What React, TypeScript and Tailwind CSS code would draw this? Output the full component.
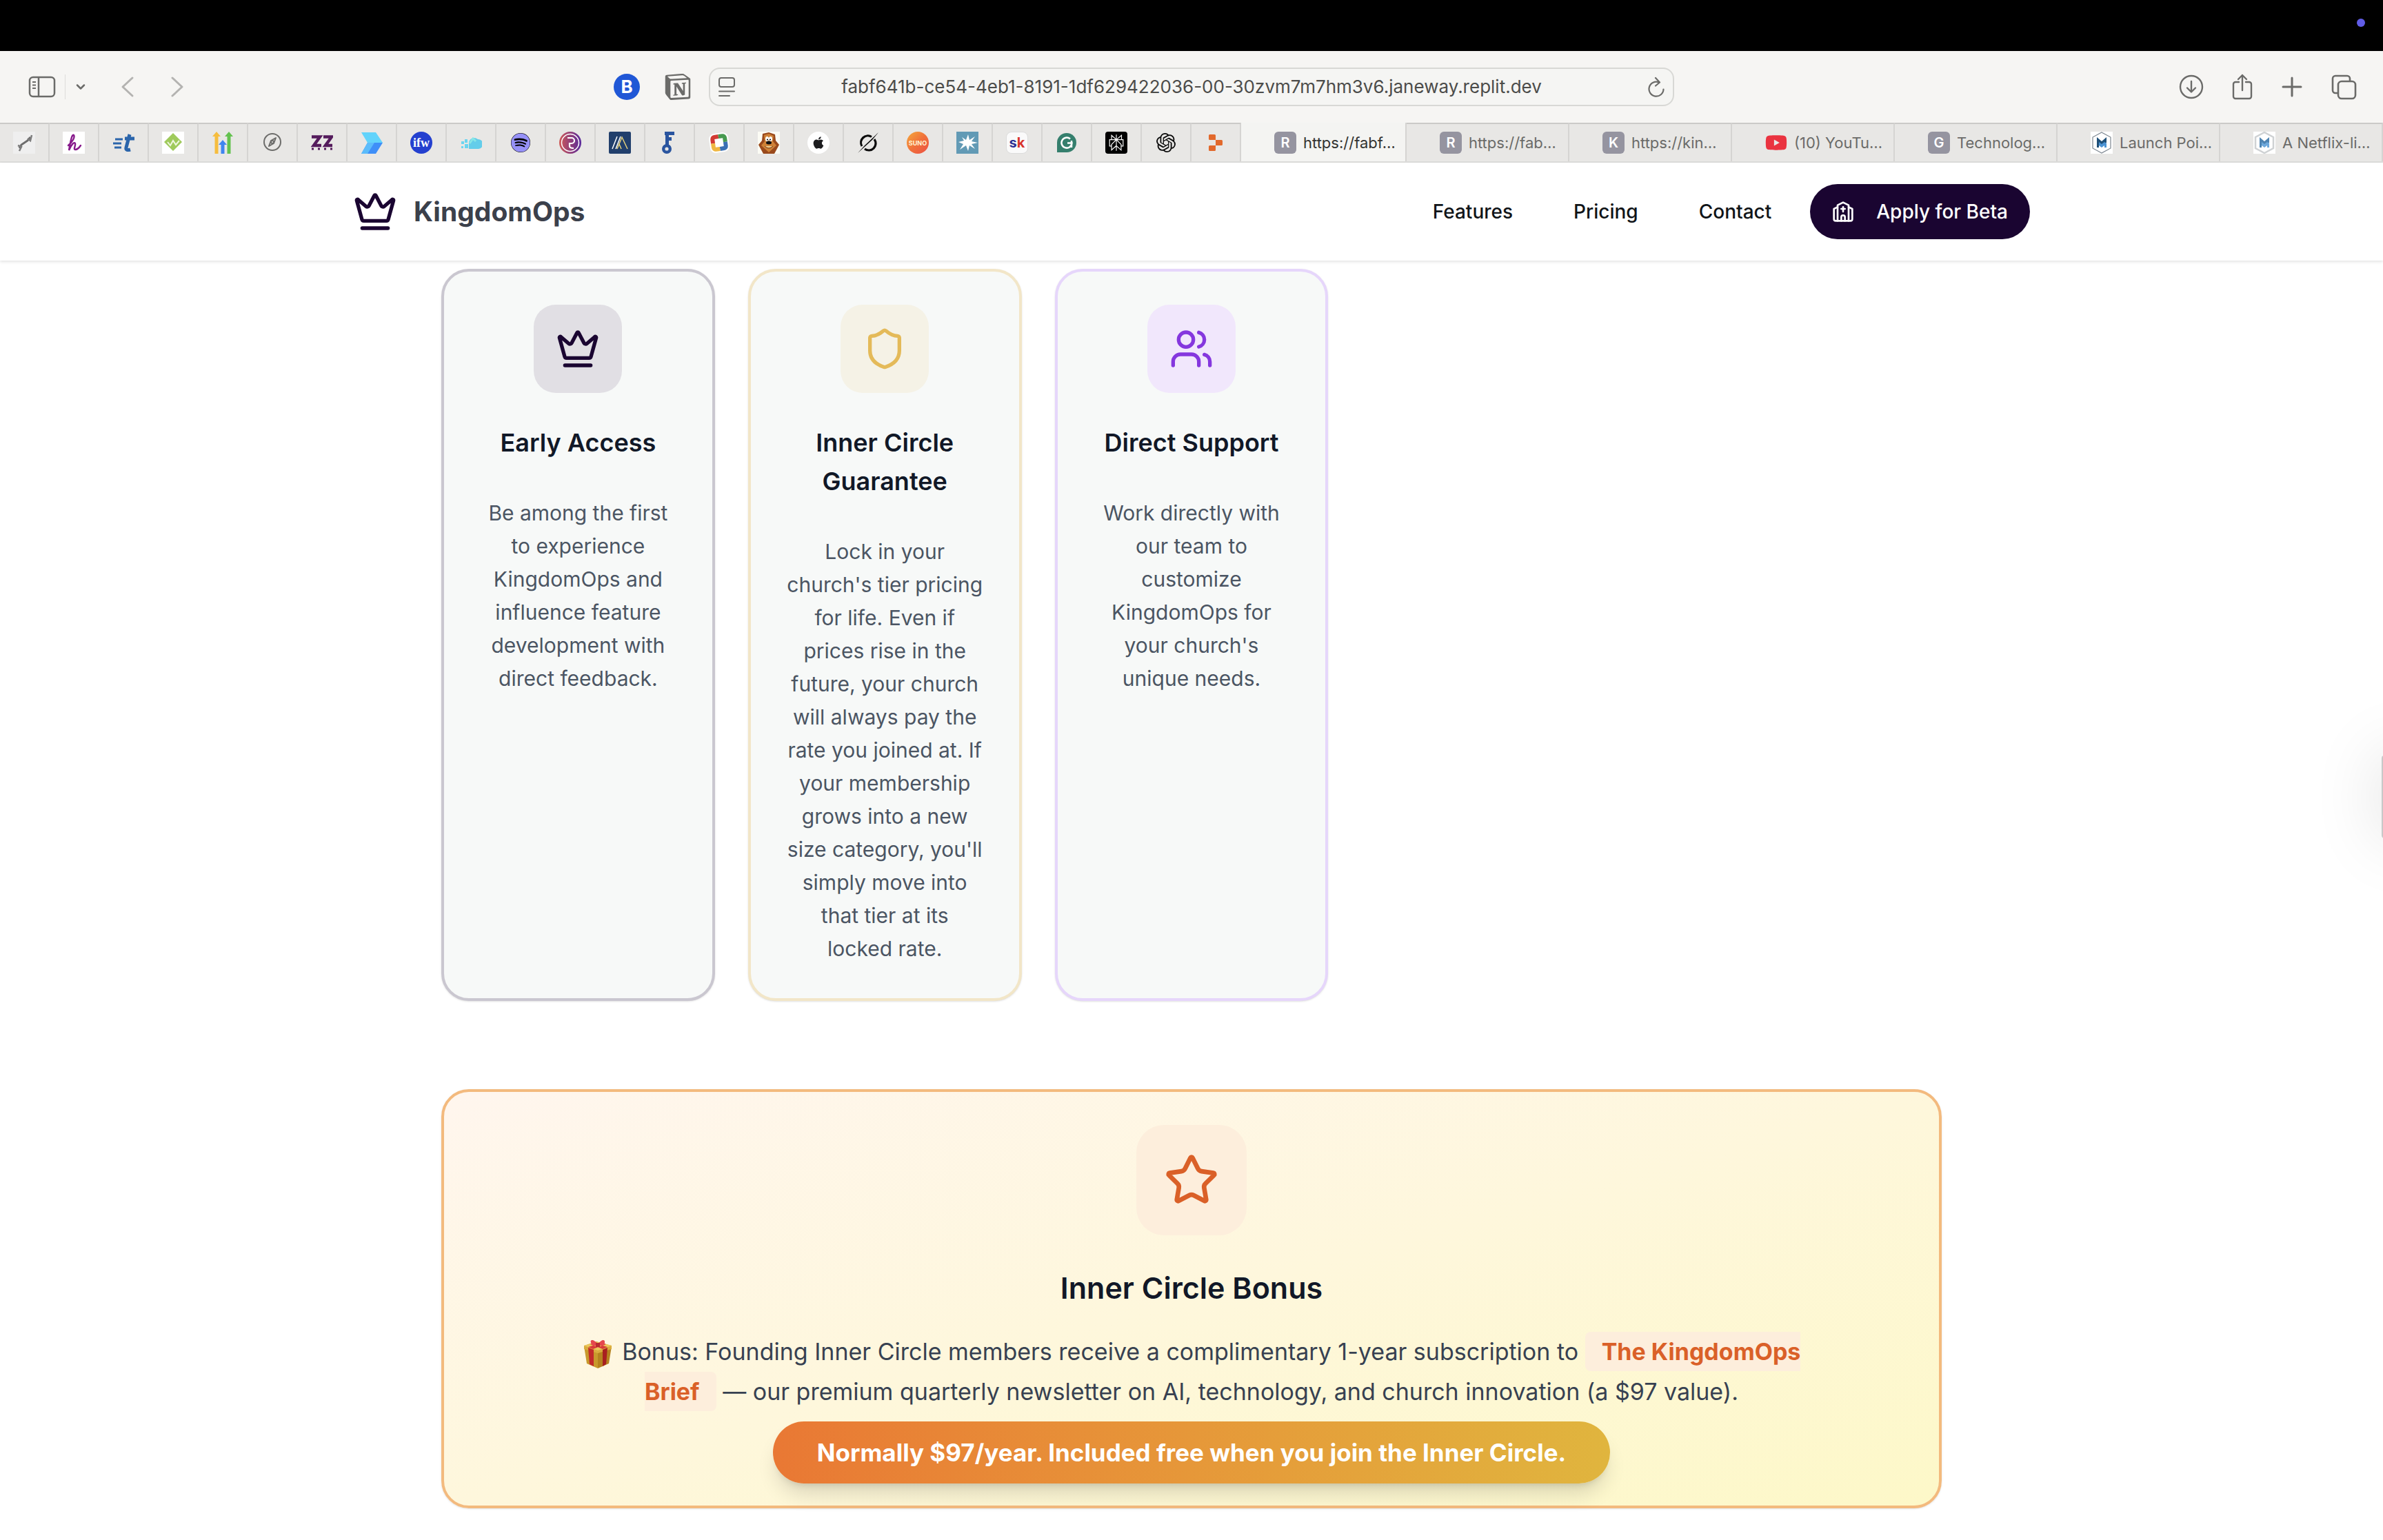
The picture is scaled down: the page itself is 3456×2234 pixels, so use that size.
import type { ReactNode } from "react";
import { ChevronDown, Crown, Shield, Star, Users } from "lucide-react";
import { FaApple, FaSpotify, FaYoutube } from "react-icons/fa";
import { SiNotion, SiOpenai, SiPerplexity, SiReplit } from "react-icons/si";

function ChurchIcon() {
  return (
    <svg viewBox="0 0 24 24" fill="none" stroke="currentColor" strokeWidth="2" strokeLinecap="round" strokeLinejoin="round" className="size-8" aria-hidden="true">
      <path d="m18 7 4 2v11a2 2 0 0 1-2 2H4a2 2 0 0 1-2-2V9l4-2" />
      <path d="M14 22v-4a2 2 0 0 0-4 0v4" />
      <path d="M18 22V5l-6-3-6 3v17" />
      <path d="M12 7v5" />
      <path d="M10 9h4" />
    </svg>
  );
}

function GiftIcon() {
  return (
    <svg viewBox="0 0 44 44" className="mr-1 inline-block size-11 align-middle" role="img" aria-label="Gift">
      <path d="M2 11 22 18V43L6 36Z" fill="#c8992c" />
      <path d="M42 11 22 18V43L38 36Z" fill="#b5821f" />
      <path d="M2 10 20 4 42 10V15L22 21 2 15Z" fill="#d9ac3e" />
      <path d="M2 10 22 5 42 10 22 17Z" fill="#ecc95c" />
      <path d="M8 13 16 16V40L10 37Z" fill="#c22a2a" />
      <path d="M36 13 29 16V40L34 37Z" fill="#a82020" />
      <path d="M8 12 28 6 34 8 15 15ZM36 12 16 6 11 8 29 15Z" fill="#d93a3a" />
      <path d="M22 8C16 0 10 1 12 6S18 11 22 9C26 11 31 11 32 6S28 0 22 8Z" fill="#e5484d" />
      <path d="M19 6h6v6h-6z" fill="#b92b31" />
    </svg>
  );
}

function Tile({ className, children }: { className: string; children: ReactNode }) {
  return <span className={`flex size-8 shrink-0 items-center justify-center overflow-hidden ${className}`}>{children}</span>;
}

const svgClass = "size-8 shrink-0";

const pinned: { label: string; icon: ReactNode }[] = [
  {
    label: "Sketch",
    icon: (
      <svg viewBox="0 0 32 32" className={svgClass}>
        <rect width="32" height="32" fill="#efefef" />
        <path d="M9 24 12 19 21 13 25 8" fill="none" stroke="#6d6d6d" strokeWidth="3" />
        <path d="M7 20 12 22 9 28M21 10 25 13 27 5" fill="none" stroke="#7d7d7d" strokeWidth="2.500" />
      </svg>
    ),
  },
  {
    label: "Honeybook",
    icon: (
      <svg viewBox="0 0 32 32" className={svgClass}>
        <rect width="32" height="32" fill="#fff" />
        <path d="M8 20C14 15 18 8 16 5 13 3 11 16 9 27 12 19 17 14 18 17 19 20 15 26 18 26 22 26 24 23 26 20" fill="none" stroke="#871a8b" strokeWidth="2.400" strokeLinecap="round" />
      </svg>
    ),
  },
  {
    label: "Toggl",
    icon: (
      <svg viewBox="0 0 32 32" className={svgClass}>
        <path d="M4 11h11M1 17h12M3 23h10" stroke="#2b65ab" strokeWidth="3" />
        <path d="M25 4 20 23Q19 28 26 26M18 10h14" fill="none" stroke="#2b65ab" strokeWidth="5" />
      </svg>
    ),
  },
  {
    label: "Diamond",
    icon: (
      <svg viewBox="0 0 32 32" className={svgClass}>
        <rect width="32" height="32" fill="#fff" />
        <path d="M16 2 29 15 16 28 3 15Z" fill="#9fca5c" />
        <path d="M8 15l4 5 4-7 4 6 5-6" fill="none" stroke="#eff7df" strokeWidth="2" />
      </svg>
    ),
  },
  {
    label: "Arrows",
    icon: (
      <svg viewBox="0 0 32 32" className={svgClass}>
        <path d="M7 0 13 7H9.500V32H4.500V7H1Z" fill="#f6bd3e" />
        <path d="M25 0 31 7H27.500V32H22.500V7H19Z" fill="#63c24f" />
        <path d="M16 12 22 19H18.500V32H13.500V19H10Z" fill="#3f85f0" />
      </svg>
    ),
  },
  {
    label: "Start page",
    icon: (
      <svg viewBox="0 0 32 32" className={svgClass} fill="none" stroke="#6d6d6b" strokeWidth="2">
        <circle cx="16" cy="15" r="12" />
        <path d="M21 9 18 17 11 21 14 13Z" strokeLinejoin="round" />
        <circle cx="16" cy="15" r="2" />
      </svg>
    ),
  },
  {
    label: "Zigzag",
    icon: (
      <svg viewBox="0 0 32 32" className={svgClass}>
        <path d="M1 7.500H13L4 20H15M18 7.500H30L21 20H31" fill="none" stroke="#541b5c" strokeWidth="4.500" />
        <path d="M1 25h3M10 25h3M19 25h3M28 25h3" stroke="#541b5c" strokeWidth="3" />
      </svg>
    ),
  },
  {
    label: "Arrowhead",
    icon: (
      <svg viewBox="0 0 32 32" className={svgClass}>
        <path d="M1 1H22L32 16H10Z" fill="#62d3fb" />
        <path d="M10 16H32L22 32H1Z" fill="#3f8ff8" />
        <path d="M10 16H20L10 32H1Z" fill="#5cbcfb" />
      </svg>
    ),
  },
  {
    label: "IFW",
    icon: <Tile className="rounded-full bg-[#2440cf] font-['Liberation_Serif',serif] text-lg leading-none font-bold text-white">ifw</Tile>,
  },
  {
    label: "Cloud",
    icon: (
      <svg viewBox="0 0 32 32" className={svgClass}>
        <path d="M13 25V15A8 8 0 0 1 26 11 7 7 0 0 1 27 25Z" fill="#63cdea" />
        <path d="M14 17l5-7 4 4" fill="none" stroke="#86e6e6" strokeWidth="3" />
        <g fill="#6bd5f0">
          <rect x="2" y="14" width="4" height="4" />
          <rect x="7" y="11" width="4" height="5" />
          <rect x="7" y="18" width="5" height="6" />
          <rect x="2" y="21" width="3" height="3" />
        </g>
      </svg>
    ),
  },
  { label: "Spotify", icon: <Tile className="rounded-full"><FaSpotify className="size-7 rounded-full bg-black text-[#9691f7]" /></Tile> },
  {
    label: "Rose",
    icon: (
      <svg viewBox="0 0 32 32" className={svgClass}>
        <defs>
          <linearGradient id="rose" x1="0" x2="1">
            <stop offset="0" stopColor="#cf5a57" />
            <stop offset="1" stopColor="#58289c" />
          </linearGradient>
        </defs>
        <circle cx="16" cy="16" r="16" fill="url(#rose)" />
        <circle cx="16" cy="16" r="12.500" fill="none" stroke="#fff" strokeWidth="1.500" />
        <path d="M12 9h6a4 4 0 0 1 0 8h-3v4q0 3 6 3" fill="none" stroke="#fff" strokeWidth="2.200" />
      </svg>
    ),
  },
  {
    label: "Peaks",
    icon: (
      <svg viewBox="0 0 32 32" className={svgClass}>
        <rect width="32" height="32" rx="2" fill="#213f6c" />
        <path d="M5 25 12 7M10 25 17 7" stroke="#fff" strokeWidth="1.500" />
        <path d="M12 25 19 8 27 25M15 18 18 25" fill="none" stroke="#e6d27c" strokeWidth="1.500" />
      </svg>
    ),
  },
  {
    label: "Key",
    icon: (
      <svg viewBox="0 0 32 32" className={svgClass} fill="none" stroke="#2a559f">
        <path d="M9 2.500H23M12.500 20V2M12 10.500H19" strokeWidth="5" />
        <circle cx="12" cy="25" r="4.800" strokeWidth="4.400" />
      </svg>
    ),
  },
  {
    label: "Photos",
    icon: (
      <svg viewBox="0 0 32 32" className={svgClass}>
        <g transform="rotate(-8 16 16)">
          <rect x="2" y="2" width="28" height="28" rx="8" fill="#fff" />
          <path d="M4 16V10a6 6 0 0 1 6-6h6v6h-6v6Z" fill="#d23a33" />
          <path d="M16 4h6a6 6 0 0 1 6 6v6h-6v-6h-6Z" fill="#479a50" />
          <path d="M28 16v6a6 6 0 0 1-6 6h-6v-6h6v-6Z" fill="#396fb4" />
          <path d="M16 28h-6a6 6 0 0 1-6-6v-6h6v6h6Z" fill="#efb742" />
        </g>
      </svg>
    ),
  },
  {
    label: "Lion",
    icon: (
      <svg viewBox="0 0 32 32" className={svgClass}>
        <rect width="32" height="32" fill="#fbfbf4" />
        <path d="M7 3 16 1 25 4 26 13 31 19 24 32H8L1 19 6 13Z" fill="#9a4a1c" />
        <path d="M9 5 16 3 23 6 22 14 27 20 16 30 5 20 10 14Z" fill="#cf8237" />
        <ellipse cx="13.500" cy="10.500" rx="2.500" ry="3.500" fill="#fff" />
        <ellipse cx="18.500" cy="10.500" rx="2.500" ry="3.500" fill="#fff" />
        <circle cx="14" cy="11.500" r="1" />
        <circle cx="18" cy="11.500" r="1" />
        <ellipse cx="16" cy="16" rx="4" ry="2.500" fill="#111" />
        <path d="M10 21q6 6 12 0" fill="#f1cf92" stroke="#6d3412" />
      </svg>
    ),
  },
  { label: "Apple", icon: <Tile className="rounded-full bg-white text-[#1d1d1f]"><FaApple className="size-5" /></Tile> },
  {
    label: "Grok",
    icon: (
      <svg viewBox="0 0 32 32" className={svgClass} fill="none" stroke="#0b0b0b">
        <path d="M7 21A10 10 0 0 1 21 7.500M25 11A10 10 0 0 1 11 25" strokeWidth="3.200" />
        <path d="M1 31 11 20 31 1 22 12 12 21Z" fill="#0b0b0b" stroke="none" />
      </svg>
    ),
  },
  {
    label: "Suno",
    icon: <Tile className="rounded-full bg-linear-to-br from-[#f4a83c] via-[#f0713a] to-[#ec4f44] text-[9px] leading-none font-bold text-[#fff3d6]">SUNO</Tile>,
  },
  {
    label: "Spark",
    icon: (
      <svg viewBox="0 0 32 32" className={svgClass}>
        <rect width="32" height="32" fill="#629ab5" />
        <path d="M17 4 19 12 27 7 22 14 31 16 22 18 27 25 19 20 17 28 14 20 5 26 10 18 3 15 11 13 8 8 14 12Z" fill="#fff" />
      </svg>
    ),
  },
  {
    label: "SK",
    icon: (
      <Tile className="rounded-lg border border-[#dcdcdc] bg-[#fafafa] text-xl leading-none font-bold">
        <span className="text-[#2b2f92]">s</span>
        <span className="text-[#d8342c]">k</span>
      </Tile>
    ),
  },
  {
    label: "Grammarly",
    icon: (
      <svg viewBox="0 0 32 32" className={svgClass}>
        <path d="M2 30V16A14 14 0 1 1 16 30Z" fill="#357f6d" />
        <path d="M21 10.500A7.500 7.500 0 1 0 23.500 16.500H17M23 13v10" fill="none" stroke="#fff" strokeWidth="2.500" />
      </svg>
    ),
  },
  { label: "Perplexity", icon: <Tile className="rounded bg-black text-white"><SiPerplexity className="size-6" /></Tile> },
  { label: "ChatGPT", icon: <Tile className="text-[#0d0d0d]"><SiOpenai className="size-7" /></Tile> },
  { label: "Replit", icon: <Tile className="text-[#e2692c]"><SiReplit className="size-6" /></Tile> },
];

function LetterIcon({ letter }: { letter: string }) {
  return <Tile className="rounded-md bg-[#9594a0] text-xl font-semibold text-white">{letter}</Tile>;
}

function ShieldM({ faded }: { faded?: boolean }) {
  return (
    <svg viewBox="0 0 32 32" className={svgClass}>
      <rect width="32" height="32" fill="#fff" />
      <path d="M16 1 29 8V24L16 31 3 24V8Z" fill="none" stroke={faded ? "#cfd2d4" : "#7d8791"} strokeWidth={faded ? 2.5 : 1.2} />
      <path d="M9 8 16 14 23 8V16L16 21 12 18V23H9Z" fill={faded ? "#4f84b2" : "#1f5078"} />
      <path d="M12 15 16 18 20 15 23 17V23H20V20L16 23 12 20Z" fill={faded ? "#6ea9dc" : "#4b93d3"} />
    </svg>
  );
}

const tabs: { title: string; icon: ReactNode }[] = [
  { title: "https://fab…", icon: <LetterIcon letter="R" /> },
  { title: "https://kin…", icon: <LetterIcon letter="K" /> },
  { title: "(10) YouTu…", icon: <FaYoutube className="size-8 shrink-0 text-[#ea3340]" /> },
  { title: "Technolog…", icon: <LetterIcon letter="G" /> },
  { title: "Launch Poi…", icon: <ShieldM /> },
  { title: "A Netflix-li…", icon: <ShieldM faded /> },
];

function Toolbar() {
  return (
    <div className="grid h-26 grid-cols-[1fr_minmax(0,1400px)_1fr] items-center bg-[#f6f5f3] text-[#6b6b69]">
      <div className="flex items-center justify-between pr-[26px] pl-10">
        <div className="flex items-center">
          <button aria-label="Show sidebar" className="pr-3">
            <svg viewBox="0 0 42 32" className="h-8 w-[42px]" fill="none" stroke="currentColor" strokeWidth="2.500">
              <rect x="3" y="2" width="36" height="28" rx="5" />
              <path d="M16 2V30" />
              <path d="M7 9h5M7 13.500h5M7 18h5" strokeWidth="2" />
            </svg>
          </button>
          <span className="h-9 w-px bg-[#dddcda]" />
          <button aria-label="Tab groups" className="pl-3">
            <ChevronDown className="size-5" strokeWidth={3} />
          </button>
          <button aria-label="Back" className="ml-12 text-[#b4b3b1]">
            <svg viewBox="0 0 20 32" className="h-8 w-5" fill="none" stroke="currentColor" strokeWidth="3" strokeLinecap="round" strokeLinejoin="round">
              <path d="M17 3 3 16 17 29" />
            </svg>
          </button>
          <button aria-label="Forward" className="ml-13 text-[#b4b3b1]">
            <svg viewBox="0 0 20 32" className="h-8 w-5" fill="none" stroke="currentColor" strokeWidth="3" strokeLinecap="round" strokeLinejoin="round">
              <path d="M3 3 17 16 3 29" />
            </svg>
          </button>
        </div>
        <div className="flex items-center gap-9">
          <button aria-label="Extension" className="flex size-[38px] items-center justify-center rounded-full bg-[#2057d6] text-[26px] leading-none font-bold text-white">
            B
          </button>
          <button aria-label="Notion">
            <SiNotion className="size-[38px]" />
          </button>
        </div>
      </div>
      <div className="flex h-14 items-center rounded-2xl border-2 border-[#d8d8d5] bg-[#f5f5f3] px-3">
        <button aria-label="Reader">
          <svg viewBox="0 0 24 28" className="h-7 w-6" fill="none" stroke="currentColor" strokeWidth="2" strokeLinecap="round">
            <rect x="1" y="1" width="22" height="13" rx="3" />
            <path d="M1 20.500H23M1 27H16" />
          </svg>
        </button>
        <input
          aria-label="Address"
          readOnly
          value="fabf641b-ce54-4eb1-8191-1df629422036-00-30zvm7m7hm3v6.janeway.replit.dev"
          className="min-w-0 flex-1 bg-transparent text-center text-[26px] leading-8 text-[#4c4c4a] outline-none"
        />
        <button aria-label="Reload">
          <svg viewBox="0 0 24 31" className="h-[31px] w-6" fill="none" stroke="currentColor" strokeWidth="2.200" strokeLinecap="round" strokeLinejoin="round">
            <path d="M16 8.500A10.500 10.500 0 1 0 22.500 18.500M11 2l6 6.500-6 5" />
          </svg>
        </button>
      </div>
      <div className="flex items-center justify-end gap-10 pr-[38px]">
        <button aria-label="Downloads">
          <svg viewBox="0 0 36 36" className="size-9" fill="none" stroke="currentColor" strokeWidth="2.400" strokeLinecap="round" strokeLinejoin="round">
            <circle cx="18" cy="18" r="16" />
            <path d="M18 10V25M12 19.500 18 25.500 24 19.500" />
          </svg>
        </button>
        <button aria-label="Share">
          <svg viewBox="0 0 32 40" className="h-10 w-8" fill="none" stroke="currentColor" strokeWidth="2.400" strokeLinecap="round" strokeLinejoin="round">
            <path d="M11 13H6a3 3 0 0 0-3 3V34a3 3 0 0 0 3 3H26a3 3 0 0 0 3-3V16a3 3 0 0 0-3-3H21M16 25V3M10 9 16 3 22 9" />
          </svg>
        </button>
        <button aria-label="New tab">
          <svg viewBox="0 0 32 32" className="size-8" fill="none" stroke="currentColor" strokeWidth="3" strokeLinecap="round">
            <path d="M16 3V29M3 16H29" />
          </svg>
        </button>
        <button aria-label="Tab overview">
          <svg viewBox="0 0 38 38" className="size-[38px]" fill="none" stroke="currentColor" strokeWidth="2.600" strokeLinejoin="round">
            <rect x="11" y="11" width="25" height="25" rx="5" />
            <path d="M11 28H7a4 4 0 0 1-4-4V7a4 4 0 0 1 4-4H24a4 4 0 0 1 4 4v4" />
          </svg>
        </button>
      </div>
    </div>
  );
}

function TabStrip() {
  return (
    <div className="flex h-[58px] border-b-2 border-[#dcdcda] bg-[#e8e7e5] text-[22px] leading-8 text-[#6b6b69]">
      {pinned.map((tab) => (
        <button key={tab.label} aria-label={tab.label} className="flex w-18 shrink-0 items-center justify-center border-t-2 border-r-2 border-t-[#cbcac8] border-r-[#d5d4d2]">
          {tab.icon}
        </button>
      ))}
      <button className="flex flex-[241] items-center gap-2.5 border-r-2 border-[#d5d4d2] bg-[#f4f4f2] pt-0.5 pl-12 whitespace-nowrap text-[#333331]">
        <LetterIcon letter="R" />
        https://fabf…
      </button>
      {tabs.map((tab) => (
        <button key={tab.title} className="flex flex-[236] items-center gap-2.5 border-t-2 border-r-2 border-t-[#cbcac8] border-r-[#d5d4d2] pl-12 whitespace-nowrap">
          {tab.icon}
          {tab.title}
        </button>
      ))}
    </div>
  );
}

function SiteHeader() {
  return (
    <header className="relative bg-white shadow-[0_2px_4px_rgba(0,0,0,0.11)]">
      <div className="mx-auto flex h-[142px] max-w-[2560px] items-center justify-between px-16">
        <a href="#" className="flex items-center gap-6 text-[39px] leading-14 font-bold text-[#3b404b]">
          <Crown className="size-16 text-[#1a0531]" />
          KingdomOps
        </a>
        <nav className="flex items-center gap-6 text-[28px] leading-10 font-medium text-[#101418]">
          <a href="#features" className="px-8">Features</a>
          <a href="#pricing" className="px-8">Pricing</a>
          <a href="#contact" className="px-8">Contact</a>
          <button className="flex h-20 items-center gap-8 rounded-full bg-[#1a0531] px-8 text-white">
            <ChurchIcon />
            Apply for Beta
          </button>
        </nav>
      </div>
    </header>
  );
}

const benefits = [
  {
    title: "Early Access",
    text: "Be among the first to experience KingdomOps and influence feature development with direct feedback.",
    border: "border-[#cac7d0]",
    tile: "bg-[#e1dfe4] text-[#1a0531]",
    Icon: Crown,
  },
  {
    title: "Inner Circle Guarantee",
    text: "Lock in your church's tier pricing for life. Even if prices rise in the future, your church will always pay the rate you joined at. If your membership grows into a new size category, you'll simply move into that tier at its locked\u00a0rate.",
    border: "border-[#f2e6c8]",
    tile: "bg-[#f5f2e6] text-[#e4ba59]",
    Icon: Shield,
  },
  {
    title: "Direct Support",
    text: "Work directly with our team to customize KingdomOps for your church's unique needs.",
    border: "border-[#e6d6fb]",
    tile: "bg-[#f1e7fc] text-[#8537de]",
    Icon: Users,
  },
];

export default function App() {
  return (
    <div className="relative min-h-screen overflow-hidden bg-white font-['Inter',sans-serif]">
      <div className="flex h-[74px] items-center justify-end bg-black pr-[26px]">
        <span className="-mt-2 size-3 rounded-full bg-[#605ce6]" />
      </div>
      <Toolbar />
      <TabStrip />
      <SiteHeader />
      <main className="mx-auto max-w-[2176px] pt-3 pb-12">
        <section className="grid grid-cols-5 gap-12">
          {benefits.map(({ title, text, border, tile, Icon }) => (
            <article key={title} className={`flex flex-col items-center rounded-[40px] border-4 bg-[#f7f9f8] p-12 text-center shadow-sm ${border}`}>
              <div className={`flex size-32 items-center justify-center rounded-4xl ${tile}`}>
                <Icon className="size-16" />
              </div>
              <h3 className="mt-11 text-[36px] leading-14 font-semibold text-[#111827]">{title}</h3>
              <p className="mt-[50px] text-[30px] leading-12 text-[#4b5563]">{text}</p>
            </article>
          ))}
        </section>
        <section className="mt-32 flex flex-col items-center rounded-[40px] border-4 border-[#f3ba7e] bg-linear-to-br from-[#fff6ee] via-[#fef7dc] to-[#fdf8c8] px-12 pt-12 pb-8 text-center shadow-sm">
          <div className="flex size-40 items-center justify-center rounded-[40px] bg-[#fdeedc] text-[#da6028]">
            <Star className="size-20" />
          </div>
          <h3 className="mt-11 text-[43px] leading-16 font-semibold text-[#111827]">Inner Circle Bonus</h3>
          <p className="mt-8 max-w-[1792px] text-[34px] leading-[58px] text-[#374151]">
            <GiftIcon /> Bonus: Founding Inner Circle members receive a complimentary 1-year subscription to{" "}
            <strong className="rounded-lg bg-[#fdeedc] px-6 py-2 font-bold text-[#da6028]">The KingdomOps Brief</strong> — our premium quarterly
            newsletter on AI, technology, and church innovation (a $97 value).
          </p>
          <p className="mt-3.5 rounded-full bg-linear-to-r from-[#e97834] to-[#e0b53e] px-16 text-[35px] leading-[90px] font-bold text-white shadow-[0_20px_30px_-6px_rgba(0,0,0,0.14),0_8px_12px_-8px_rgba(0,0,0,0.16)]">
            Normally $97/year. Included free when you join the Inner Circle.
          </p>
        </section>
      </main>
      <aside className="absolute top-[1096px] left-full -ml-0.5 h-30 w-20 rounded-sm bg-[#c8c8c8] shadow-[0_0_100px_rgba(0,0,0,0.13)]" />
    </div>
  );
}
